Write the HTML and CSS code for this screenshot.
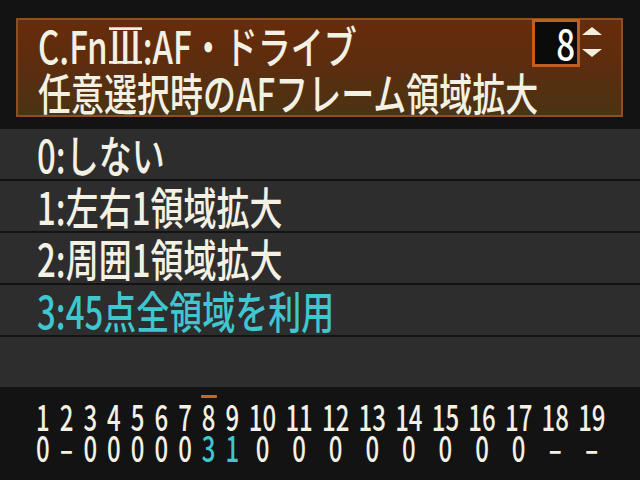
FILE: index.html
```html
<!DOCTYPE html>
<html lang="ja">
<head>
<meta charset="utf-8">
<title>C.Fn III</title>
<link rel="stylesheet" href="styles.css">
</head>
<body>
<div class="screen">
  <header class="panel">
    <div class="panel-row">
      <span class="tall">C.Fn<span class="roman">Ⅲ</span>:AF・ドライブ</span>
      <div class="spinner">
        <span class="spin-value"><span class="tall">8</span></span>
        <svg class="spin-arrows" width="20" height="32" viewBox="0 0 20 32">
          <polygon points="10,0 20,8 0,8" fill="#f2eedf"/>
          <polygon points="0,22 20,22 10,30" fill="#f2eedf"/>
        </svg>
      </div>
    </div>
    <div class="panel-row">
      <span class="tall">任意選択時のAFフレーム領域拡大</span>
    </div>
  </header>

  <ul class="options">
    <li><span class="tall">0:しない</span></li>
    <li><span class="tall">1:左右1領域拡大</span></li>
    <li><span class="tall">2:周囲1領域拡大</span></li>
    <li class="current"><span class="tall">3:45点全領域を利用</span></li>
    <li></li>
  </ul>

  <div class="fn-table">
    <span class="marker"></span>
    <span class="idx">1</span><span class="idx">2</span><span class="idx">3</span><span class="idx">4</span><span class="idx">5</span><span class="idx">6</span><span class="idx">7</span><span class="idx">8</span><span class="idx">9</span><span class="idx">10</span><span class="idx">11</span><span class="idx">12</span><span class="idx">13</span><span class="idx">14</span><span class="idx">15</span><span class="idx">16</span><span class="idx">17</span><span class="idx">18</span><span class="idx">19</span>
    <span class="val">0</span><span class="val">–</span><span class="val">0</span><span class="val">0</span><span class="val">0</span><span class="val">0</span><span class="val">0</span><span class="val hl">3</span><span class="val hl">1</span><span class="val">0</span><span class="val">0</span><span class="val">0</span><span class="val">0</span><span class="val">0</span><span class="val">0</span><span class="val">0</span><span class="val">0</span><span class="val">–</span><span class="val">–</span>
  </div>
</div>
</body>
</html>
```

FILE: styles.css
```css
html, body {
  margin: 0;
  padding: 0;
}

body {
  width: 640px;
  height: 480px;
  overflow: hidden;
  background: #131313;
  color: #f3f0e4;
  font-family: "Noto Sans CJK JP", "Noto Sans", sans-serif;
  font-weight: 500;
}

.screen {
  padding-top: 18px;
}

/* tall, narrow on-screen lettering */
.tall {
  display: inline-block;
  font-size: 33px;
  line-height: 1;
  white-space: nowrap;
  transform: scaleY(1.35);
}

/* roman numeral with top and bottom bars */
.roman {
  display: inline-block;
  line-height: 23px;
  border-top: 2px solid currentColor;
  border-bottom: 2px solid currentColor;
  margin: 0 1px;
  vertical-align: baseline;
}

/* title panel */
.panel {
  margin: 0 17px 0 16px;
  height: 99px;
  box-sizing: border-box;
  border: 2px solid #8e4f22;
  background: linear-gradient(#672c0b 0%, #5d2d0e 45%, #4a3313 100%);
  padding: 0 19px 0 20px;
}

.panel-row {
  display: flex;
  align-items: center;
}

.panel-row:first-child {
  height: 50px;
}

.panel-row:last-child {
  height: 45px;
}

.spinner {
  margin-left: auto;
  align-self: flex-start;
  margin-top: -1px;
  display: flex;
  align-items: center;
  gap: 2px;
}

.spin-value {
  width: 48px;
  height: 48px;
  box-sizing: border-box;
  border: 3px solid #c45c1c;
  background: #0b0b0b;
  display: flex;
  align-items: center;
  justify-content: flex-end;
  padding-right: 2px;
}

.spin-value .tall {
  transform: scaleY(1.25);
  color: #ffffff;
}

.spin-arrows {
  display: block;
}

/* option rows */
.options {
  list-style: none;
  margin: 12px 0 0;
  padding: 0;
  display: flex;
  flex-direction: column;
  gap: 2px;
}

.options li {
  height: 50px;
  background: #2d2d2d;
  padding-left: 37px;
  display: flex;
  align-items: center;
}

.options li.current {
  color: #3fc6cf;
}

/* function number / setting table */
.fn-table {
  margin: 8px 0 0 31px;
  display: grid;
  grid-template-columns: repeat(9, 23.7px) repeat(10, 36.6px);
  grid-template-rows: 3px 28px 28px;
  row-gap: 3px;
}

.marker {
  grid-row: 1;
  grid-column: 8;
  justify-self: center;
  width: 16px;
  height: 3px;
  border-radius: 1px;
  background: #c8662a;
}

.idx,
.val {
  align-self: center;
  text-align: center;
  font-size: 24px;
  line-height: 19px;
  transform: scaleY(1.45);
}

.idx {
  grid-row: 2;
}

.val {
  grid-row: 3;
}

.val.hl {
  color: #3fc6cf;
}
```
